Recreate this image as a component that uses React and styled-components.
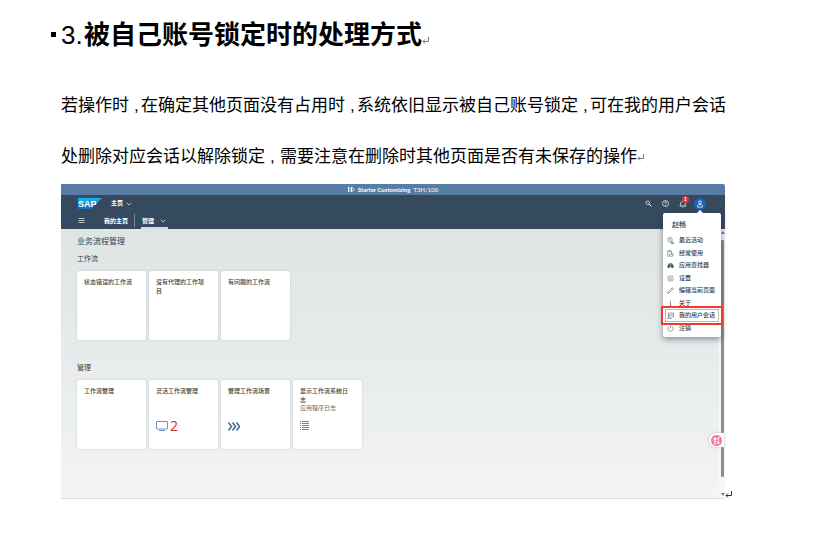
import React from "react";
import styled, { createGlobalStyle } from "styled-components";

const Global = createGlobalStyle`
  *, *::before, *::after { box-sizing: border-box; }
  body {
    margin: 0;
    background: #fff;
    color: #000;
    font-family: "Liberation Sans", "Noto Sans CJK SC", sans-serif;
  }
  h1, h2, h3, h4, p, ul, figure { margin: 0; padding: 0; }
  button { border: 0; padding: 0; background: none; font: inherit; color: inherit; text-align: left; }
  a { color: inherit; text-decoration: none; }
  svg { display: block; flex: none; }
`;

/* ---------- document ---------- */
const Article = styled.main`
  padding: 17px 103px 40px 61px;
`;
const Heading = styled.h1`
  position: relative;
  display: flex;
  align-items: center;
  font-size: 26px;
  line-height: 36px;
  font-weight: 700;
  white-space: nowrap;
  &::before {
    content: "";
    position: absolute;
    left: -10px;
    top: 15px;
    width: 5px;
    height: 5px;
    background: #000;
  }
`;
const Numeral = styled.span`
  width: 23px;
  font-weight: 400;
`;
const Paragraph = styled.p`
  padding-top: 27px;
  font-size: 17px;
  line-height: 51px;
  white-space: nowrap;
`;
const Comma = styled.span`
  display: inline-block;
  width: ${(p) => (p.$wide ? 15 : 12)}px;
  padding-left: 5px;
`;
const MarkSvg = styled.svg`
  display: ${(p) => (p.$inline ? "inline-block" : "block")};
  align-self: flex-end;
  margin-bottom: ${(p) => p.$lift || 0}px;
`;
const Return = ({ color = "#777", ...rest }) => (
  <MarkSvg width="7" height="9" viewBox="0 0 7 9" fill="none" stroke={color} aria-hidden="true" {...rest}>
    <path d="M6.5 1v4.5H1M3 3.5l-2 2 2 2" />
  </MarkSvg>
);
const Figure = styled.figure`
  display: flex;
  padding-top: 2px;
`;

/* ---------- application ---------- */
const Frame = styled.section`
  position: relative;
  flex: 1;
  color: #3c4044;
  font-size: 6px;
  line-height: 9px;
  border-bottom: 1px solid #dcdfe2;
`;
const SystemBar = styled.div`
  display: flex;
  justify-content: center;
  align-items: center;
  gap: 3px;
  height: 11px;
  background: #587da5;
  color: #fff;
  border-radius: 1px 2px 0 0;
  font-family: Lato, sans-serif;
`;
const Header = styled.header`
  height: 34px;
  background: #354a5f;
  color: #fff;
  font-weight: 700;
`;
const BrandRow = styled.div`
  display: flex;
  align-items: center;
  height: 17px;
  padding: 0 19px 0 17px;
`;
const HomeButton = styled.button`
  display: flex;
  align-items: center;
  gap: 3px;
  margin-left: 9px;
`;
const Actions = styled.div`
  display: flex;
  align-items: center;
  gap: 6px;
  margin-left: auto;
`;
const IconButton = styled.button`
  position: relative;
  display: grid;
  place-items: center;
  width: 11px;
  height: 12px;
`;
const Avatar = styled(IconButton)`
  width: 12px;
  border-radius: 50%;
  background: #1d64b4;
`;
const Badge = styled.span`
  position: absolute;
  left: 5px;
  top: -2px;
  width: 7px;
  height: 7px;
  border-radius: 50%;
  background: #d9363e;
  font-size: 5px;
  line-height: 7px;
  text-align: center;
`;
const Nav = styled.nav`
  display: flex;
  align-items: stretch;
  height: 17px;
  padding-left: 17px;
`;
const MenuButton = styled.button`
  display: grid;
  place-items: center;
  width: 7px;
`;
const NavLink = styled.a`
  display: flex;
  align-items: center;
  gap: 6px;
  margin-left: ${(p) => (p.$active ? 6 : 18)}px;
  padding: 1px 2px 0 1px;
  ${(p) => p.$active && "border-bottom: 2px solid #c9dcf0; padding-top: 3px;"}
`;
const Divider = styled.span`
  width: 1px;
  height: 13px;
  margin: 2px 0 0 4px;
  background: #7c8c9d;
`;
const Body = styled.div`
  display: flex;
  height: 269px;
`;
const Content = styled.div`
  flex: 1;
  padding: 7px 16px 0;
  background: linear-gradient(to bottom, #dfe4e5, #e7eaeb 42%, #f2f4f6);
`;
const PageTitle = styled.h2`
  font-size: 8px;
  line-height: 12px;
  font-weight: 400;
`;
const GroupTitle = styled.h3`
  font-size: 7px;
  line-height: 10px;
  font-weight: 400;
`;
const Group = styled.section`
  padding-top: ${(p) => p.$gap}px;
`;
const Tiles = styled.div`
  display: flex;
  flex-wrap: wrap;
  gap: 3px;
  padding-top: 7px;
`;
const Tile = styled.a`
  display: flex;
  flex-direction: column;
  width: 69px;
  height: 69px;
  padding: 7px 12px 0 7px;
  border-radius: 2px;
  background: #fff;
  box-shadow: 0 0 2px #b9bfc4;
`;
const TileTitle = styled.h4`
  font-size: 6px;
  line-height: 9px;
  font-weight: 500;
`;
const TileNote = styled.p`
  font-size: 6px;
  line-height: 7px;
  color: #6a6d70;
`;
const TileFoot = styled.div`
  display: flex;
  align-items: center;
  gap: 2px;
  height: 16px;
  margin: auto 0 15px;
`;
const Count = styled.span`
  color: #c62f35;
  font: 14px/16px "Open Sans", sans-serif;
`;
const ScrollTrack = styled.div`
  width: 6px;
  padding: 11px 1px 0 2px;
  background: #f7f8f9;
`;
const ScrollThumb = styled.div`
  height: 237px;
  background: #8d8d8d;
  border-radius: 1px;
`;
const ScrollArrow = styled.span`
  display: block;
  width: 4px;
  height: 3px;
  margin-top: 16px;
  background: #777;
  clip-path: polygon(0 0, 100% 0, 50% 100%);
`;
const ScrollUp = styled(ScrollArrow)`
  margin: -9px 0 6px;
  clip-path: polygon(50% 0, 100% 100%, 0 100%);
`;

/* ---------- user menu ---------- */
const Popover = styled.div`
  position: absolute;
  right: 4px;
  top: 29px;
  width: 58px;
  height: 124px;
  padding-top: 5px;
  border-radius: 2px;
  background: #fff;
  box-shadow: 0 2px 6px rgba(30, 40, 50, 0.5);
  &::before {
    content: "";
    position: absolute;
    top: -3px;
    left: 34px;
    border: 3px solid transparent;
    border-top: 0;
    border-bottom-color: #fff;
  }
`;
const UserName = styled.h3`
  padding-left: 9px;
  font-size: 7px;
  line-height: 14px;
  font-weight: 500;
`;
const MenuList = styled.ul`
  list-style: none;
  padding-top: 2px;
`;
const MenuItem = styled.button`
  display: flex;
  align-items: center;
  gap: 5px;
  width: 54px;
  height: ${(p) => (p.$odd ? 13 : 12)}px;
  margin-left: 2px;
  padding-left: 2px;
  font-weight: 500;
  white-space: nowrap;
  ${(p) => p.$focus && "outline: 1px solid #bbb; outline-offset: -1px;"}
`;
const Callout = styled.div`
  position: absolute;
  right: 2px;
  top: 122px;
  width: 62px;
  height: 19px;
  border: 2px solid #f03a2d;
  border-radius: 1px;
`;
const Assistant = styled.button`
  position: absolute;
  right: 1px;
  bottom: 51px;
  display: grid;
  place-items: center;
  width: 15px;
  height: 14px;
  border-radius: 7px 0 0 7px;
  background: #fff;
  box-shadow: 0 0 3px #bbb;
`;

const Chevron = () => (
  <svg width="6" height="4" viewBox="0 0 6 4" fill="none" stroke="#dce4ec" strokeWidth=".8"><path d="M.7.8 3 3.1 5.3.8" /></svg>
);
const Icon = ({ children, color = "#6a6d70", size = 7 }) => (
  <svg width={size} height={size} viewBox="0 0 14 14" fill="none" stroke={color} strokeWidth="1.3" aria-hidden="true">{children}</svg>
);

const menu = [
  ["最近活动", <><circle cx="6" cy="5.5" r="4.5" /><path d="M6 3v3l2 1M8 10l5 3H7M10 8l3 5" /></>],
  ["经常使用", <><path d="M5 12.5H1.5v-10H9V6M3.5 2.5V1h3v1.5" /><circle cx="9" cy="9.5" r="3.5" /><path d="M9 7.5v2h2" /></>],
  ["应用查找器", <g fill="#44484c"><circle cx="3.5" cy="9" r="2.5" /><circle cx="10.5" cy="9" r="2.5" /><path d="M2 7l2-4h2v5h2V3h2l2 4" /></g>],
  ["设置", <><circle cx="7" cy="7" r="2" /><path d="M7 1l1.7 1.5 2.3-.2.3 2.3L13 7l-1.7 2-.3 2.4-2.3-.2L7 13l-1.7-1.8-2.3.2L2.7 9 1 7l1.7-2.4.3-2.3 2.3.2z" /></>],
  ["编辑当前页面", <path d="M1.5 12.5l1-3.5 8-7.5 2 2-8 8zM9 3l2 2" />],
  ["关于", <path d="M7 1v2M5.5 5.5H7v7M5.5 12.5h3" strokeWidth="1.8" />],
  ["我的用户会话", <><path d="M3 8V2h10v8H9" /><circle cx="4.5" cy="7" r="2" /><path d="M1 13c0-5 7-5 7 0zM8 5h3M9 7.5h2" /></>],
  ["注销", <path d="M4 3a5.2 5.2 0 1 0 6 0M7 .5V7" />],
];

export default function App() {
  return (
    <>
      <Global />
      <Article lang="zh-CN">
        <Heading>
          <Numeral>3.</Numeral>被自己账号锁定时的处理方式<Return $lift={8} />
        </Heading>
        <Paragraph>
          若操作时<Comma>,</Comma>在确定其他页面没有占用时<Comma>,</Comma>系统依旧显示被自己账号锁定<Comma>,</Comma>可在我的用户会话
          <br />
          处删除对应会话以解除锁定<Comma $wide>,</Comma>需要注意在删除时其他页面是否有未保存的操作<Return $inline />
        </Paragraph>
        <Figure>
          <Frame>
            <SystemBar>
              <Icon color="#fff"><path d="M1 2l5 5-5 5zM7 2l5 5-5 5z" strokeWidth="1.8" /></Icon>
              <b>Starter Customizing</b>
              <span>T3H/100</span>
            </SystemBar>
            <Header>
              <BrandRow>
                <svg width="24" height="11" viewBox="0 0 24 11" role="img" aria-label="SAP">
                  <defs><linearGradient id="sap" x2="0" y2="1"><stop stopColor="#18b5ee" /><stop offset="1" stopColor="#1769c1" /></linearGradient></defs>
                  <path d="M0 0h24L13 11H0z" fill="url(#sap)" />
                  <text x="0" y="9" fill="#fff" fontFamily="Liberation Sans, sans-serif" fontSize="9" fontWeight="700">SAP</text>
                </svg>
                <HomeButton>主页<Chevron /></HomeButton>
                <Actions>
                  <IconButton aria-label="搜索"><Icon color="#fff"><circle cx="5.5" cy="5.5" r="3.5" /><path d="M8 8l5 5" strokeWidth="2" /></Icon></IconButton>
                  <IconButton aria-label="帮助"><Icon color="#fff"><circle cx="7" cy="7" r="6" /><path d="M5 5.5c0-3 4-2.5 4 0C9 7 7 7 7 8.5M7 10v1.5" /></Icon></IconButton>
                  <IconButton aria-label="通知"><Icon color="#fff" size={8}><path d="M1.5 10.5h11L11 8.5V6c0-5-8-5-8 0v2.5zM6 12.5h2" /></Icon><Badge>1</Badge></IconButton>
                  <Avatar aria-label="用户"><Icon color="#fff" size={8}><circle cx="7" cy="4" r="2.5" /><path d="M3 12.5V10c0-3 8-3 8 0v2.5z" /></Icon></Avatar>
                </Actions>
              </BrandRow>
              <Nav>
                <MenuButton aria-label="菜单"><Icon color="#fff"><path d="M1 3h12M1 7h12M1 11h12" /></Icon></MenuButton>
                <NavLink href="#home">我的主页</NavLink>
                <Divider />
                <NavLink href="#admin" $active>管理<Chevron /></NavLink>
              </Nav>
            </Header>
            <Body>
              <Content>
                <PageTitle>业务流程管理</PageTitle>
                <Group $gap={6}>
                  <GroupTitle>工作流</GroupTitle>
                  <Tiles>
                    <Tile href="#t1"><TileTitle>状态错误的工作流</TileTitle></Tile>
                    <Tile href="#t2"><TileTitle>没有代理的工作项目</TileTitle></Tile>
                    <Tile href="#t3"><TileTitle>有问题的工作流</TileTitle></Tile>
                  </Tiles>
                </Group>
                <Group $gap={23}>
                  <GroupTitle>管理</GroupTitle>
                  <Tiles>
                    <Tile href="#t4"><TileTitle>工作流管理</TileTitle></Tile>
                    <Tile href="#t5">
                      <TileTitle>灵活工作流管理</TileTitle>
                      <TileFoot>
                        <svg width="12" height="10" viewBox="0 0 12 10" fill="none" stroke="#6d93bd"><rect x=".5" y=".5" width="11" height="7.5" rx=".5" /><path d="M3 9.5h6" /></svg>
                        <Count>2</Count>
                      </TileFoot>
                    </Tile>
                    <Tile href="#t6">
                      <TileTitle>管理工作流场景</TileTitle>
                      <TileFoot>
                        <svg width="12" height="9" viewBox="0 0 12 9" fill="none" stroke="#426d9e" strokeWidth="1.6"><path d="M.5.5l3 4-3 4M4.500.5l3 4-3 4M8.500.5l3 4-3 4" /></svg>
                      </TileFoot>
                    </Tile>
                    <Tile href="#t7">
                      <TileTitle>显示工作流系统日志</TileTitle>
                      <TileNote>应用程序日志</TileNote>
                      <TileFoot>
                        <svg width="9" height="10" viewBox="0 0 9 10" fill="none" stroke="#5b87b7"><path d="M0 .5h1M2 .5h7M0 2.5h1M2 2.5h7M0 4.5h1M2 4.5h7M0 6.5h1M2 6.5h7M0 8.5h1M2 8.5h7" /></svg>
                      </TileFoot>
                    </Tile>
                  </Tiles>
                </Group>
              </Content>
              <ScrollTrack><ScrollUp /><ScrollThumb /><ScrollArrow /></ScrollTrack>
            </Body>
            <Popover>
              <UserName>赵畅</UserName>
              <MenuList>
                {menu.map(([label, drawing], i) => (
                  <li key={label}>
                    <MenuItem $odd={i % 2 === 0} $focus={i === 6}><Icon>{drawing}</Icon>{label}</MenuItem>
                  </li>
                ))}
              </MenuList>
            </Popover>
            <Callout />
            <Assistant aria-label="翻译">
              <svg width="11" height="11" viewBox="0 0 22 22" fill="none" stroke="#fff" strokeWidth="1.6"><circle cx="11" cy="11" r="11" fill="#ed7897" stroke="none" /><circle cx="8" cy="8" r="2.5" fill="#fff" /><path d="M13 5h4l-4 5h4M5 13h5l-4 5h4M12 18l2.5-6 2.5 6M13 16h3" /></svg>
            </Assistant>
          </Frame>
          <Return color="#333" />
        </Figure>
      </Article>
    </>
  );
}
